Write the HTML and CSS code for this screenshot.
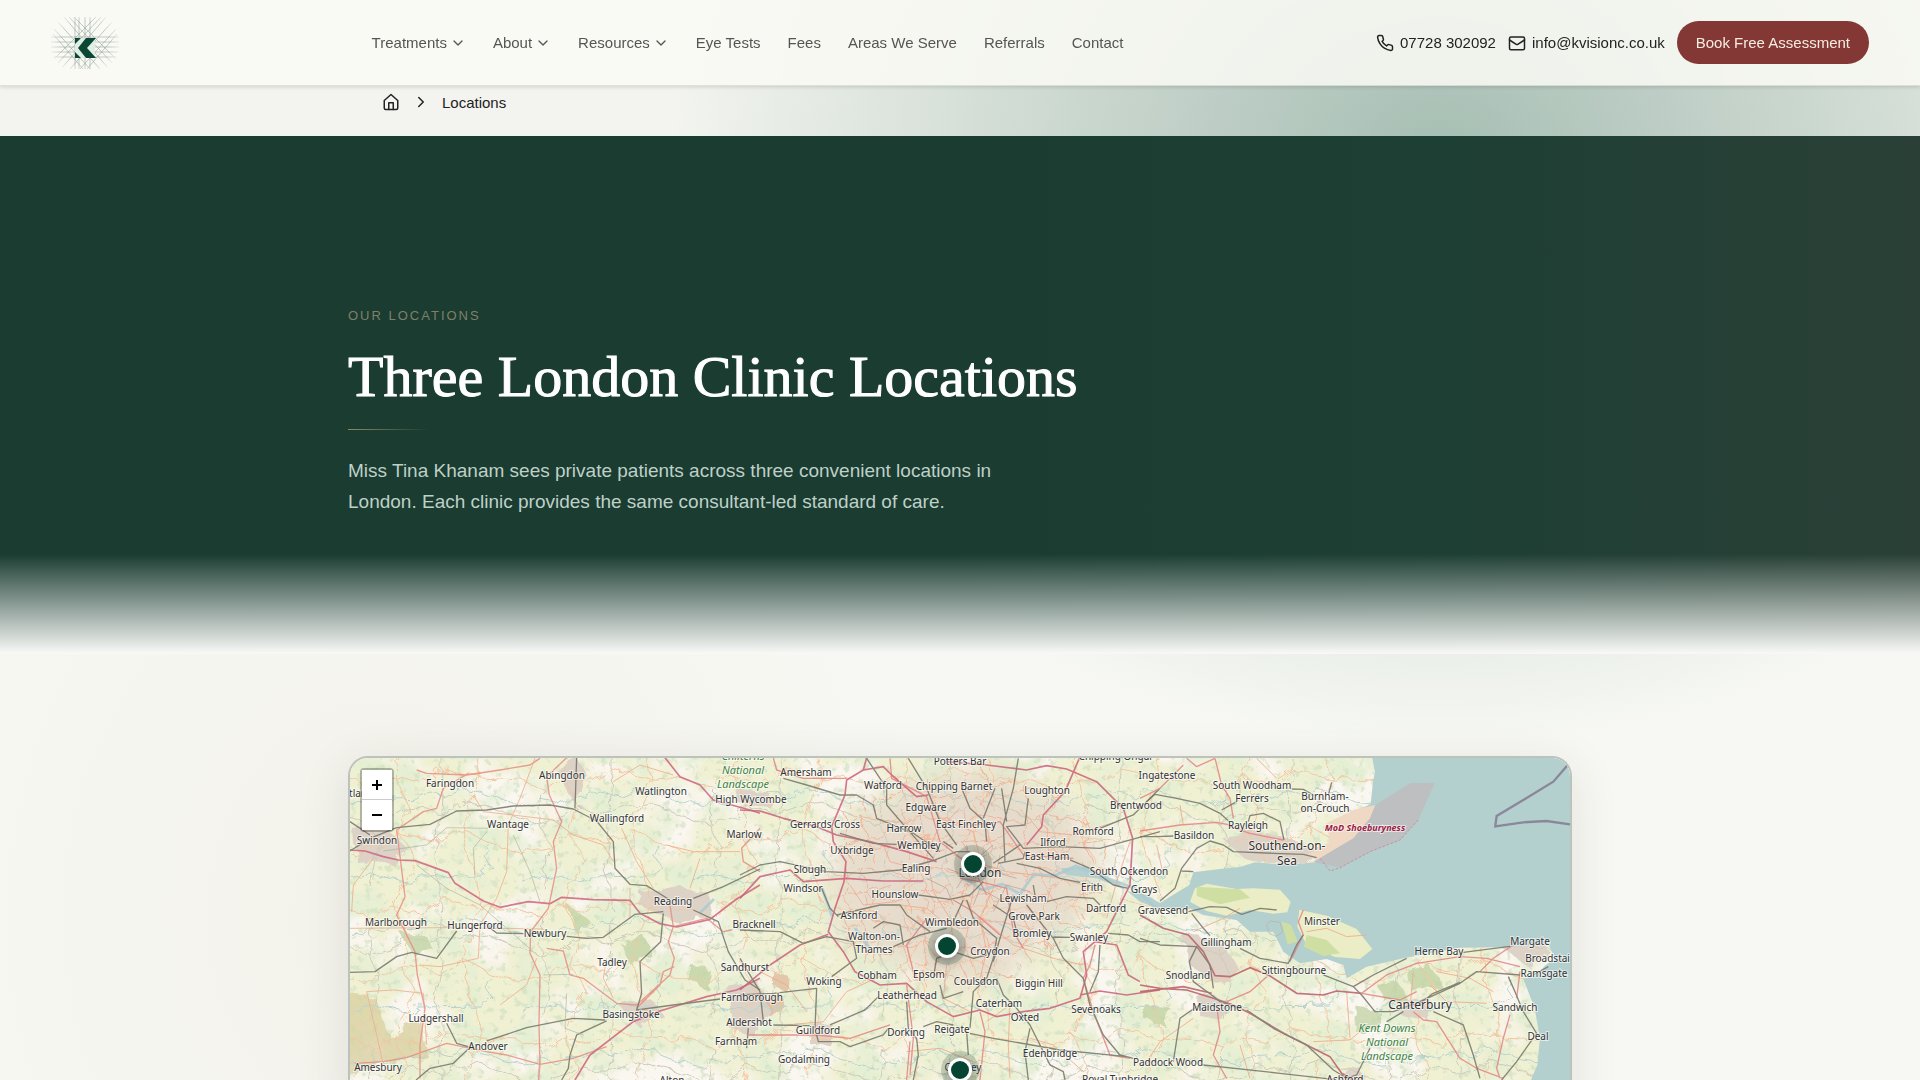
FILE: index.html
```html
<!DOCTYPE html>
<html lang="en-GB">
<head>
    <meta charset="UTF-8">
    <meta name="viewport" content="width=device-width, initial-scale=1.0">
    <title>Three London Clinic Locations</title>
    <link rel="stylesheet" href="styles.css">
</head>
<body>
    <header class="site-header">
        <a class="logo" href="#" aria-label="Home">
            <svg viewBox="0 0 68 52" width="68" height="52">
                <defs>
                    <radialGradient id="logoFade">
                        <stop offset="0.7" stop-color="#fff"/>
                        <stop offset="1" stop-color="#fff" stop-opacity="0.3"/>
                    </radialGradient>
                    <mask id="logoMask"><ellipse cx="34" cy="26" rx="35" ry="32" fill="url(#logoFade)"/></mask>
                </defs>
                <g stroke="#84958d" stroke-width="0.5" mask="url(#logoMask)">
                    <path d="M0 20H68M0 25H68M0 30H68M0 35H68M0 40H68M24 0V52M28 0V52M34 0V52M39 0V52"/>
                    <path d="M13 0L58 52M18 0L63 48M7 5L49 52M3 12L39 52M2 17L32 52M23 0L66 43"/>
                    <path d="M55 0L10 52M50 0L5 48M61 5L19 52M65 12L29 52M66 17L36 52M45 0L2 43"/>
                </g>
                <path d="M24 21h20v20H24z" fill="#e1eee6"/>
                <path d="M35 21h10L36 31l9 10H35L27 31z" fill="#0a4734"/>
                <path d="M24 21h6l-6 6zM24 35l6 6h-6z" fill="#0a4734"/>
            </svg>
        </a>
        <nav class="main-nav" aria-label="Main">
            <a href="#">Treatments <svg class="chev" viewBox="0 0 24 24"><path d="m6 9 6 6 6-6"/></svg></a>
            <a href="#">About <svg class="chev" viewBox="0 0 24 24"><path d="m6 9 6 6 6-6"/></svg></a>
            <a href="#">Resources <svg class="chev" viewBox="0 0 24 24"><path d="m6 9 6 6 6-6"/></svg></a>
            <a href="#">Eye Tests</a>
            <a href="#">Fees</a>
            <a href="#">Areas We Serve</a>
            <a href="#">Referrals</a>
            <a href="#">Contact</a>
        </nav>
        <div class="actions">
            <a class="contact-link" href="tel:07728302092">
                <svg class="icon" viewBox="0 0 24 24"><path d="M22 16.92v3a2 2 0 0 1-2.18 2 19.79 19.79 0 0 1-8.63-3.07 19.5 19.5 0 0 1-6-6 19.79 19.79 0 0 1-3.07-8.67A2 2 0 0 1 4.11 2h3a2 2 0 0 1 2 1.72 12.84 12.84 0 0 0 .7 2.81 2 2 0 0 1-.45 2.11L8.09 9.91a16 16 0 0 0 6 6l1.27-1.27a2 2 0 0 1 2.11-.45 12.84 12.84 0 0 0 2.81.7A2 2 0 0 1 22 16.92z"/></svg>
                07728 302092
            </a>
            <a class="contact-link" href="mailto:info@kvisionc.co.uk">
                <svg class="icon" viewBox="0 0 24 24"><rect x="2" y="4" width="20" height="17" rx="2"/><path d="m22 8-8.97 5.7a1.94 1.94 0 0 1-2.06 0L2 8"/></svg>
                info@kvisionc.co.uk
            </a>
            <button class="book-btn" type="button">Book Free Assessment</button>
        </div>
    </header>

    <nav class="breadcrumb" aria-label="Breadcrumb">
        <div class="breadcrumb-inner">
            <a href="#" aria-label="Home"><svg class="icon" viewBox="0 0 24 24"><path d="M3 10 12 2l9 8v10a2 2 0 0 1-2 2H5a2 2 0 0 1-2-2z"/><path d="M9 22v-9h6v9"/></svg></a>
            <svg class="icon" viewBox="0 0 24 24"><path d="m9 18 6-6-6-6"/></svg>
            <span>Locations</span>
        </div>
    </nav>

    <main>
        <section class="hero">
            <div class="container">
                <p class="eyebrow">Our Locations</p>
                <h1>Three London Clinic Locations</h1>
                <div class="rule"></div>
                <p class="lead">Miss Tina Khanam sees private patients across three convenient locations in London. Each clinic provides the same consultant-led standard of care.</p>
            </div>
        </section>

        <section class="map-section">
            <div class="map">
                <div class="map-canvas">
                    <svg class="tiles" viewBox="0 0 1220 500" width="1220" height="500">
                        <defs>
                            <!-- woodland and farmland mottling -->
                            <filter id="woods" x="0" y="0" width="100%" height="100%">
                                <feTurbulence type="fractalNoise" baseFrequency="0.03" numOctaves="5" seed="8"/>
                                <feColorMatrix values="0 0 0 0 0.78  0 0 0 0 0.86  0 0 0 0 0.65  4 0 0 0 -1.9"/>
                            </filter>
                            <filter id="fields" x="0" y="0" width="100%" height="100%">
                                <feTurbulence type="fractalNoise" baseFrequency="0.014" numOctaves="4" seed="21"/>
                                <feColorMatrix values="0 0 0 0 0.96  0 0 0 0 0.92  0 0 0 0 0.87  0 6 0 0 -2.9"/>
                            </filter>
                            <filter id="copse" x="0" y="0" width="100%" height="100%">
                                <feTurbulence type="fractalNoise" baseFrequency="0.14" numOctaves="3" seed="4"/>
                                <feColorMatrix values="0 0 0 0 0.62  0 0 0 0 0.74  0 0 0 0 0.52  0 0 7 0 -4.1"/>
                            </filter>
                            <filter id="soft" x="-20%" y="-20%" width="140%" height="140%"><feGaussianBlur stdDeviation="14"/></filter>
                            <filter id="rough" x="-5%" y="-5%" width="110%" height="110%">
                                <feTurbulence type="fractalNoise" baseFrequency="0.06" numOctaves="3" seed="3"/>
                                <feDisplacementMap in="SourceGraphic" scale="14"/>
                            </filter>
                            <!-- minor roads and streams -->
                            <pattern id="lanes" width="170" height="130" patternUnits="userSpaceOnUse">
                                <g fill="none" stroke-width="1">
                                    <path stroke="#f3c6a0" d="M0 22L24 30 41 18 70 26 92 12 131 20 170 22M50 0L44 18 58 49 50 77 66 104 50 130M0 95L30 88 50 77 88 84 112 70 140 86 170 95M112 70L120 44 131 20 128 0M112 70L118 100 128 130"/>
                                    <path stroke="#cdcbbb" d="M0 60L19 66 44 58 58 49 90 55 120 44 150 52 170 60M88 84L84 112 92 130M92 0V12L90 55 88 84M24 30L19 66 30 88 22 130"/>
                                    <path stroke="#b5d2ce" d="M0 45L15 48 22 42 36 46 44 40 68 39 80 34 101 38 116 31 140 36 154 43 170 45M140 86L134 98 142 109 130 118 70 119 61 124 22 117 0 121"/>
                                </g>
                            </pattern>
                            <pattern id="streets" width="60" height="52" patternUnits="userSpaceOnUse">
                                <path fill="none" stroke="#efb59c" stroke-width="1" d="M0 10L18 14 31 6 60 10M12 0L18 14 14 33 22 52M14 33L38 30 45 41 60 37M31 6L38 30 34 52M0 37L14 33M45 41L43 52M38 30L60 22"/>
                            </pattern>
                        </defs>

                        <rect width="1220" height="500" fill="#f0f0d3"/>
                        <rect width="1220" height="500" filter="url(#fields)"/>
                        <rect width="1220" height="500" filter="url(#woods)"/>
                        <rect width="1220" height="500" filter="url(#copse)" opacity="0.6"/>

                        <!-- built-up areas -->
                        <g filter="url(#rough)">
                            <path fill="#e6dacb" filter="url(#soft)" opacity="0.9" d="M500 60L560 25 640 10 700 40 745 75 750 130 720 170 680 190 650 225 590 225 540 200 490 180 480 120z"/>
                            <path fill="#ddd2c6" d="M290 135l30-8 42 10-4 22-30 6-38-16zM4 72l30-3 20 18-10 20-38-4zM205 10l24-8 10 18-16 24zM386 30l36 6-4 12-30-3zM378 230l30-6 14 26-18 28-24-8zM270 248l30-8 12 16-24 12zM460 264l24 4-4 20-20-2zM870 78l44-6 54 20-10 14-60-2zM832 175l40 10 20 30-24 12-28-20zM850 236l28 6-8 18-22-4zM1050 240l32 2-4 20-26-4zM986 316l24-6 8 20-30 6zM1140 180l48-4 14 20-22 14z"/>
                        </g>
                        <g filter="url(#rough)" opacity="0.7">
                            <path fill="#d9cd9d" d="M-5 235L25 240 40 280 70 262 80 300 40 302-5 318z"/>
                            <path fill="#bdd09f" d="M50 174l24 2 10 16-20 6zM270 185l26-6 6 20-22 8zM342 208l16 2-2 20-14-4zM216 145l26 20-18 8zM1058 215l24-6 8 18-30 4zM1030 230l20-4 6 14-22 4zM795 246l26 4-6 18-20-6zM1008 248l22 6-2 18-24 0z"/>
                            <path fill="#e0b797" d="M424 214l14 4-2 16-12-6zM418 240l14-2 4 12-18 6z"/>
                        </g>
                        <rect width="1220" height="500" fill="url(#lanes)" filter="url(#rough)"/>
                        <path fill="url(#streets)" filter="url(#rough)" d="M490 50L560 20 640 10 720 40 760 90 750 150 700 190 650 230 580 230 500 200 480 120z"/>

                        <!-- sea and estuaries -->
                        <g transform="translate(790 -13) scale(.3333)">
                            <path fill="#b3d0cf" d="M695 30L705 80 698 120 692 178 640 200 690 190 650 260 590 300 525 352 440 360 345 352 300 366 240 372 160 382 148 420 90 455 60 475 20 450-30 440-130 400-220 390-240 370-160 365-60 420 0 470 50 490 150 490 190 510 290 525 330 560 400 560 430 620 480 655 560 642 610 660 620 700 680 665 790 640 960 608 1110 606 1225 598 1245 640 1215 662 1190 690 1150 702 1184 790 1200 880 1192 960 1150 1060 1150 1500 1400 1500 1400 30z"/>
                            <path fill="#eaedc5" d="M165 430L200 416 290 432 340 430 420 434 452 470 442 502 400 506 330 495 260 512 200 498 150 470zM478 494L560 512 650 552 697 612 660 642 585 636 500 600 472 545z"/>
                            <path fill="#cfdfa3" d="M170 425l130 8 30 25-90 20-70-25zM500 570l60 15 40 40-50 8-58-28zM425 530l28 10 20 50-30 8z"/>
                            <path fill="#bfbcbe" opacity=".85" d="M810 115L885 113 835 225 780 285 690 320 600 368 520 350 640 265 690 190z"/>
                            <path fill="#efd8c4" d="M640 195L706 180 690 220 640 280 530 345 500 330 570 290 560 235z"/>
                            <path fill="none" stroke="#c890a0" stroke-width="3" stroke-dasharray="8 5" d="M835 225L780 285 690 320 600 368 570 378 540 340"/>
                            <path fill="none" stroke="#b9aea8" stroke-width="2" d="M250 560l30-10 25 8 20 25M380 540l10-12 30 4 8 30-20 12-20-8z"/>
                            <path fill="none" stroke="#8a8798" stroke-width="7" d="M1292 50L1240 110 1150 165 1070 213 1066 244 1150 232 1220 228 1290 238"/>
                        </g>
                        <path fill="none" stroke="#a9c9d2" stroke-width="3" opacity=".8" d="M350 155l14-14M472 130l10 28M505 170l14 20M704 118l22-10 30 12 28 10 22 20M612 118l20 14 20-6 18 10 14-20 20 2"/>

                        <!-- west: railways, motorways, A roads -->
                        <g class="routes" transform="translate(-10 -13) scale(.3333)">
                            <path stroke="#f0b08c" stroke-width="3" d="M585 40L540 160 505 240 500 380 470 460 420 540 415 640 300 665 240 660M400 150L430 200 560 215 640 225 700 270 790 300 820 350M845 250L890 350 940 430M30 550L320 548 610 552M870 430L870 520M35 500L40 420 100 340M80 740L160 735 250 745 260 900M80 740L110 870 130 960M820 760L790 700 800 640M480 780L560 720 590 640M980 300L1060 320 1200 320M1080 340L1050 430M820 110L900 60 1000 90"/>
                            <path stroke="#e58e83" stroke-width="4" d="M680 38L620 95 628 150 665 230 640 290 650 370 625 490 572 560 570 625 600 690 597 840 600 960 595 1010M230 75L260 85 380 90 480 75 570 60 600 40M385 85L310 130 290 190 250 200 170 255 182 350 195 455 170 510 225 620 232 690 255 790 240 900 240 1000M44 955L130 950 200 938 320 895 440 920 500 930 600 958 700 940 800 905M620 610L670 618 690 690 730 700 830 775 890 780 990 690 1003 640 985 590 1000 545 990 480M890 790L960 720 970 680 1003 665M1000 545L1100 520 1150 560 1175 555M1260 250L1205 310 1210 350 1260 380"/>
                            <path stroke="#ce647f" stroke-width="5" d="M30 315L75 318 130 335 175 345 225 347 325 383 345 415 430 468 480 487 565 470 630 476 665 457 760 464 870 466 900 505 960 536 1010 546 1110 523 1190 462 1260 420M975 38L1020 95 1080 120 1120 165 1230 195 1260 205M705 1005L750 930 880 830 960 798 1100 755 1190 735 1260 700"/>
                            <path stroke="#747468" stroke-width="4" d="M30 318L90 280 170 248 270 238 350 198 440 195 520 183 630 180 700 192 770 228 820 290 825 370 870 418 920 422 985 462M710 38L705 190M30 230L90 270M1060 460L1150 425 1260 372M1060 495L1135 530 1165 620 1215 705 1260 735M970 500L885 508 790 577 740 580 680 574M550 566L470 564 445 545M350 558L290 640 215 622 170 635 105 680 30 682M970 505L962 590 900 650 905 745 890 795 1000 780 1140 762M795 825L700 820 560 848 440 888M800 828L710 870 690 930 685 970 665 1005M320 835L350 895 385 905M385 912L340 955 270 970 228 1005M1225 850L1220 910"/>
                            <path stroke="#9eaa96" stroke-width="2" d="M445 250L320 248 260 300 130 318M230 360L320 430 420 480 580 620M405 390L400 310 440 260M520 270L570 380 600 470M680 745L675 850 730 870M610 690L700 688"/>
                        </g>
                        <!-- London and the home counties -->
                        <g class="routes" transform="translate(390 -13) scale(.3333)">
                            <path stroke="#f0aa8b" stroke-width="3" d="M660 190L590 260 560 330 580 440 630 520 640 590M780 330L760 430 720 520 740 620 720 700M570 150L600 220 700 260 720 340 700 440 690 490M860 210L900 260 1000 270 1130 230M640 330L800 380 960 400 1100 440M430 300L450 350 560 380M480 480L560 490 620 540 740 530 820 600 940 640 1030 660M740 830L810 780 805 900 810 1000M140 840L250 830 320 740 430 690M620 660L610 760 690 800M1170 290L1130 410 1100 520M330 420L370 480 470 470M870 880L940 900 1030 980M60 680L140 720 200 800M500 920L600 910 700 950"/>
                            <path stroke="#e28483" stroke-width="4" d="M100 38L110 75 190 100 320 100M450 40L455 100 560 155 600 290 650 330 700 370 740 450M700 240L780 230 850 330 1000 340M660 400L720 410 800 430 820 560 850 610M510 890L500 1005M500 720L520 880 510 990M720 800L735 860 720 1005M640 465L700 500 780 570M20 870L230 870 330 880 450 840M520 680L500 600 560 520M1065 600L1050 660 1030 700 1060 800 1110 930 1170 940"/>
                            <path stroke="#cc6279" stroke-width="5" d="M0 195L60 198 130 220 230 245 290 270 390 290 500 320 590 350M380 38L370 75 320 105 315 150 275 245 280 290 318 350 312 410 285 490 265 560 310 620 345 680 420 720 500 715 560 770 640 815 720 795 770 815 850 800 930 790 1020 760 1040 690 1030 620 1065 590 1100 560 1170 420 1178 280 1150 190 1070 110 980 72 920 62 860 75 740 60 620 50M370 75L430 65 455 90 530 155 565 150M1018 40L975 140 910 210 905 245 860 300M0 460L60 395 150 375 190 410 320 400 430 408 550 408M0 735L90 660 180 600 265 568M1065 590L1130 600 1165 690 1200 710M1020 750L1080 738 1160 750 1260 735"/>
                            <path stroke="#747468" stroke-width="4" d="M0 390L60 360 120 350 260 380 370 385 480 375 585 345 650 320 690 320M380 40L440 130 440 180 500 250 580 340M130 100L200 120 300 150 350 150 400 180 410 220 520 265 600 320M505 40L560 130 600 230 650 300M665 130L690 190 735 230 740 290M765 130L730 220M835 40L820 130 790 240 795 350M785 130L800 230M865 160L855 240 800 245 850 310 960 305 1080 310 1260 260M775 355L850 340 855 320M990 345L1050 370 1120 420 1165 430M830 355L900 370 960 400 1020 412M1260 130L1180 210 1080 250M300 265L400 295 470 298M295 515L270 490 245 430M290 510L420 480 480 480 500 510 570 560M400 550L430 530 480 540 490 600M0 555L120 560 190 595 260 575 340 590 350 640 275 695M460 605L540 570 620 550M535 450L630 463 690 450 730 410M670 465L640 530M680 465L700 520 770 580 760 640 740 700 700 740 690 850M820 450L780 580 760 650M760 480L820 520 830 560M920 470L980 455 1060 460 1080 480M860 480L940 580 970 640 1030 700 1050 780 1090 870 1140 930 1180 940M940 576L990 577M1105 565L1165 570 1200 590 1260 590M0 750L100 745 230 730 225 850M230 870L235 890 300 890 330 905 430 870 445 850M415 755L375 795 270 840M500 770L505 850 530 880 535 930 520 1005M550 845L590 830 640 840M680 860L685 930M690 865L760 880 960 915 1160 935 1180 940M770 700L790 750 830 790 870 840 905 910M870 850L855 920 865 1005M905 910L930 960 970 980 975 1005M100 840L210 842M600 720L610 760 670 740M0 640L60 740 70 830M580 700L590 640 640 620 700 640 740 630M1080 600L1075 680 1050 740M610 290L640 310M760 355L840 300M880 420L885 450"/>
                            <path stroke="#b08f83" stroke-width="2" d="M620 370L700 400 760 380 830 400M650 430L700 350 760 300M700 480L720 430 790 470M760 500L800 420 870 440M560 400L620 430 640 480M680 300L690 350 740 330"/>
                        </g>
                        <!-- Essex and Kent -->
                        <g class="routes" transform="translate(790 -13) scale(.3333)">
                            <path stroke="#f0ab8c" stroke-width="3" d="M50 300L70 390M300 100L300 160M160 560L250 520 300 490M350 40L400 90 410 100M120 180L130 240M520 890L630 885 660 860M620 740L630 880M870 720L920 770 1040 775M20 950L60 890 160 820M500 560L560 550 620 575 680 570M810 790L820 680M300 900L330 1000M890 680L990 700 1060 740"/>
                            <path stroke="#e38484" stroke-width="4" d="M0 258L120 240 230 232 270 240M225 40L245 120 270 160 280 220M270 245L330 265 430 285M140 40L170 65 225 40M0 160L60 130 130 60M665 745L740 690 830 655 960 635 1040 640 1140 665M820 800L850 825 890 830 960 940 1010 970 1090 1000M1110 810L1090 880 1070 970 1080 1000M1020 680L1060 640 1120 600M380 695L330 740 260 770M230 780L240 860 220 930 260 1000M1140 680L1130 760M665 745L780 765 830 740M490 495L475 530 490 570 450 650"/>
                            <path stroke="#b95f68" stroke-width="5" d="M0 510L70 550 145 570 190 620 225 692 270 695 330 668 385 690 470 745 550 750 590 738 665 745M0 720L60 730 140 735 220 760 280 780 330 805 440 870 570 935 605 985 640 1005M0 740L130 725 215 745"/>
                            <path stroke="#747468" stroke-width="4" d="M20 170L45 148 110 160 180 175 240 205 270 232M245 195L290 170M325 230L330 212 370 205 420 230 432 285M0 275L50 275 100 273M60 468L105 430 125 370 170 310 210 288 250 300 280 320 400 325 490 328 530 338M125 378L160 380M455 132L490 133 520 150M575 112L565 150M145 500L210 485 260 487 305 508 360 490 410 495M155 505L190 550 210 572M0 580L60 600 170 605 148 650 160 710 215 750 240 770 300 790M170 605L210 660 220 730M300 610L360 640 445 655 470 600 490 570M550 690L640 725 665 750 705 800 760 800 840 770 960 715 1010 680 1140 690M640 725L700 690 800 640M970 622L1110 604M840 775L880 745 960 712M740 830L790 800M1105 695L1125 740 1150 800 1190 865 1130 950 1085 1005M880 800L970 840 1000 930 1020 1000M690 910L650 990 620 1000 580 975 500 900 400 850 320 795M185 775L120 820 100 950M190 960L420 985 580 1003M1180 690L1225 665"/>
                        </g>

                        <g class="place">
                            <text x="8" y="39">tlan</text>
                            <text x="100" y="29">Faringdon</text><text x="212" y="21">Abingdon</text><text x="311" y="37">Watlington</text>
                            <text x="158" y="70">Wantage</text><text x="267" y="64">Wallingford</text><text x="27" y="86">Swindon</text>
                            <text x="323" y="147">Reading</text><text x="46" y="168">Marlborough</text><text x="125" y="171">Hungerford</text>
                            <text x="195" y="179">Newbury</text><text x="262" y="208">Tadley</text><text x="86" y="264">Ludgershall</text>
                            <text x="281" y="260">Basingstoke</text><text x="138" y="292">Andover</text><text x="28" y="313">Amesbury</text>
                            <text x="401" y="45">High Wycombe</text><text x="394" y="80">Marlow</text><text x="404" y="170">Bracknell</text>
                            <text x="395" y="213">Sandhurst</text><text x="402" y="243">Farnborough</text><text x="399" y="268">Aldershot</text>
                            <text x="386" y="287">Farnham</text><text x="322" y="326">Alton</text>
                            <text x="456" y="18">Amersham</text><text x="533" y="31">Watford</text><text x="604" y="32">Chipping Barnet</text>
                            <text x="610" y="7">Potters Bar</text><text x="697" y="36">Loughton</text><text x="766" y="2">Chipping Ongar</text>
                            <text x="576" y="53">Edgware</text><text x="475" y="70">Gerrards Cross</text><text x="554" y="74">Harrow</text>
                            <text x="616" y="70">East Finchley</text><text x="743" y="77">Romford</text><text x="569" y="91">Wembley</text>
                            <text x="703" y="88">Ilford</text><text x="502" y="96">Uxbridge</text><text x="697" y="102">East Ham</text>
                            <text x="460" y="115">Slough</text><text x="566" y="114">Ealing</text><text x="779" y="117">South Ockendon</text>
                            <text x="453" y="134">Windsor</text><text x="545" y="140">Hounslow</text><text x="673" y="144">Lewisham</text>
                            <text x="742" y="133">Erith</text><text x="794" y="135">Grays</text><text x="509" y="161">Ashford</text>
                            <text x="684" y="162">Grove Park</text><text x="756" y="154">Dartford</text><text x="602" y="168">Wimbledon</text>
                            <text x="524" y="182">Walton-on-</text><text x="524" y="195">Thames</text><text x="682" y="179">Bromley</text>
                            <text x="739" y="183">Swanley</text><text x="640" y="197">Croydon</text><text x="527" y="221">Cobham</text>
                            <text x="579" y="220">Epsom</text><text x="474" y="227">Woking</text><text x="626" y="227">Coulsdon</text>
                            <text x="689" y="229">Biggin Hill</text><text x="557" y="241">Leatherhead</text><text x="649" y="249">Caterham</text>
                            <text x="746" y="255">Sevenoaks</text><text x="675" y="263">Oxted</text><text x="468" y="276">Guildford</text>
                            <text x="556" y="278">Dorking</text><text x="602" y="275">Reigate</text><text x="700" y="299">Edenbridge</text>
                            <text x="454" y="305">Godalming</text><text x="613" y="313">Crawley</text><text x="770" y="325">Royal Tunbridge</text>
                            <text x="818" y="308">Paddock Wood</text>
                            <text x="817" y="21">Ingatestone</text><text x="786" y="51">Brentwood</text><text x="902" y="31">South Woodham</text>
                            <text x="902" y="44">Ferrers</text><text x="975" y="42">Burnham-</text><text x="975" y="54">on-Crouch</text>
                            <text x="898" y="71">Rayleigh</text><text x="844" y="81">Basildon</text><text x="813" y="156">Gravesend</text>
                            <text x="972" y="167">Minster</text><text x="876" y="188">Gillingham</text><text x="944" y="216">Sittingbourne</text>
                            <text x="838" y="221">Snodland</text><text x="1089" y="197">Herne Bay</text><text x="1180" y="187">Margate</text>
                            <text x="1202" y="204">Broadstairs</text><text x="1194" y="219">Ramsgate</text><text x="1165" y="253">Sandwich</text>
                            <text x="867" y="253">Maidstone</text><text x="1188" y="282">Deal</text><text x="995" y="325">Ashford</text>
                        </g>
                        <g class="place city">
                            <text x="630" y="119">London</text>
                            <text x="937" y="92">Southend-on-</text><text x="937" y="107">Sea</text>
                            <text x="1070" y="251">Canterbury</text>
                        </g>
                        <g class="place park">
                            <text x="393" y="2">Chilterns</text><text x="393" y="16">National</text><text x="393" y="30">Landscape</text>
                            <text x="1037" y="274">Kent Downs</text><text x="1037" y="288">National</text><text x="1037" y="302">Landscape</text>
                        </g>
                        <text class="place mod" x="1015" y="73">MoD Shoeburyness</text>
                    </svg>
                    <button class="pin pin-london" type="button" aria-label="London clinic"></button>
                    <button class="pin pin-epsom" type="button" aria-label="Epsom clinic"></button>
                    <button class="pin pin-crawley" type="button" aria-label="Crawley clinic"></button>
                </div>
                <div class="zoom-control">
                    <button type="button" aria-label="Zoom in"><svg viewBox="0 0 12 12"><path d="M6 1v10M1 6h10"/></svg></button>
                    <button type="button" aria-label="Zoom out"><svg viewBox="0 0 12 12"><path d="M1 6h10"/></svg></button>
                </div>
            </div>
        </section>
    </main>
</body>
</html>
```
FILE: styles.css
```css
* {
    box-sizing: border-box;
}
body {
    margin: 0;
    height: 100vh;
    overflow: hidden;
    font-family: "Liberation Sans", Arial, sans-serif;
    color: #222;
    background:
        radial-gradient(40% 55% at 75% 14%, #a9c1b6, rgba(169, 193, 182, 0)),
        radial-gradient(28% 60% at 20% 85%, #f3f2eb, rgba(243, 242, 235, 0)),
        #f7f8f3;
}
a {
    color: inherit;
    text-decoration: none;
}
.icon, .chev {
    width: 18px;
    height: 18px;
    flex: none;
    fill: none;
    stroke: currentColor;
    stroke-width: 2;
    stroke-linecap: round;
    stroke-linejoin: round;
}
.chev {
    width: 16px;
    height: 16px;
}

/* header */
.site-header {
    position: fixed;
    top: 0;
    left: 0;
    right: 0;
    z-index: 10;
    height: 86px;
    padding: 0 51px;
    display: flex;
    align-items: center;
    justify-content: space-between;
    background: rgba(250, 250, 244, 0.85);
    border-bottom: 1px solid rgba(0, 0, 0, 0.1);
    box-shadow: 0 1px 4px rgba(0, 0, 0, 0.15);
}
.logo svg {
    display: block;
}
.main-nav {
    display: flex;
    gap: 27px;
    font-size: 15px;
    color: #555;
}
.main-nav a {
    display: flex;
    align-items: center;
    gap: 3px;
    white-space: nowrap;
}
.actions {
    display: flex;
    align-items: center;
    gap: 12px;
    font-size: 15px;
    white-space: nowrap;
}
.contact-link {
    display: flex;
    align-items: center;
    gap: 6px;
}
.book-btn {
    height: 43px;
    padding: 0 19px;
    border: none;
    border-radius: 22px;
    background: #833835;
    color: #f6ecdf;
    font: inherit;
    cursor: pointer;
}

/* breadcrumb */
.breadcrumb {
    height: 136px;
    padding-top: 85px;
    background: rgba(27, 61, 50, 0.02);
}
.breadcrumb-inner {
    max-width: 1224px;
    margin: 0 auto;
    padding: 8px 34px;
    display: flex;
    align-items: center;
    gap: 12px;
    font-size: 15px;
}
.breadcrumb a {
    display: flex;
}

/* hero */
.hero {
    padding: 170px 0 136px;
    background:
        linear-gradient(to top, #f9faf8, rgba(249, 250, 248, 0) 100px),
        linear-gradient(to right, #1a3c31 50%, #1e3f34 75%, #2a4037);
}
.container {
    max-width: 1224px;
    margin: 0 auto;
}
.eyebrow {
    margin: 0 0 16px;
    font-size: 13px;
    line-height: 20px;
    letter-spacing: 2px;
    text-transform: uppercase;
    color: #80806a;
}
h1 {
    margin: 0 0 17px;
    font-family: "Liberation Serif", "Times New Roman", serif;
    font-size: 58px;
    line-height: 70px;
    font-weight: normal;
    color: #fff;
    -webkit-text-stroke: 1px #fff;
}
.rule {
    width: 82px;
    height: 1px;
    margin-bottom: 25px;
    background: linear-gradient(to right, #8c8a5e, rgba(140, 138, 94, 0));
}
.lead {
    max-width: 680px;
    margin: 0;
    padding-bottom: 1px;
    font-size: 19px;
    line-height: 31px;
    color: #bfd0c8;
}

/* map */
.map-section {
    padding: 102px 0;
}
.map {
    position: relative;
    max-width: 1224px;
    height: 500px;
    margin: 0 auto;
    border: 2px solid #bcc2bc;
    border-radius: 20px;
    overflow: hidden;
    box-shadow: 0 10px 50px rgba(60, 50, 50, 0.11);
}
.map-canvas {
    position: absolute;
    top: 0;
    left: 50%;
    width: 1220px;
    margin-left: -610px;
}
.tiles {
    display: block;
}
.routes {
    fill: none;
    stroke-linejoin: round;
    opacity: 0.85;
}
.place {
    font-family: "Noto Sans", sans-serif;
    font-size: 10px;
    text-anchor: middle;
    fill: #333;
    stroke: rgba(255, 255, 255, 0.6);
    stroke-width: 2px;
    paint-order: stroke;
}
.city {
    font-size: 12px;
}
.park {
    font-size: 11px;
    font-style: italic;
    fill: #3f8345;
}
.mod {
    font-size: 9px;
    font-weight: bold;
    font-style: italic;
    fill: #9c1c45;
}
.pin {
    position: absolute;
    width: 24px;
    height: 24px;
    margin: -12px 0 0 -12px;
    padding: 0;
    border: 3px solid #fff;
    border-radius: 50%;
    background: #044532;
    box-shadow: 0 0 0 7px rgba(40, 80, 65, 0.22), 0 4px 12px rgba(0, 0, 0, 0.35);
    cursor: pointer;
}
.pin-london {
    left: 623px;
    top: 106px;
}
.pin-epsom {
    left: 597px;
    top: 188px;
}
.pin-crawley {
    left: 610px;
    top: 312px;
}
.zoom-control {
    position: absolute;
    top: 10px;
    left: 10px;
    border: 2px solid rgba(0, 0, 0, 0.25);
    border-radius: 4px;
    background-clip: padding-box;
}
.zoom-control button {
    display: flex;
    align-items: center;
    justify-content: center;
    width: 30px;
    height: 30px;
    padding: 0;
    border: none;
    background: #fff;
    cursor: pointer;
}
.zoom-control button:first-child {
    border-bottom: 1px solid #ccc;
}
.zoom-control svg {
    width: 12px;
    height: 12px;
    fill: none;
    stroke: #000;
    stroke-width: 2;
}
```
